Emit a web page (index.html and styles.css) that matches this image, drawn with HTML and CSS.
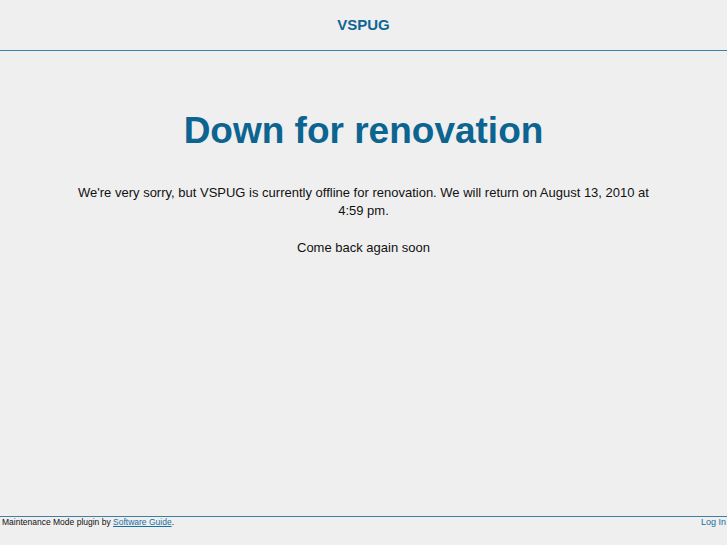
FILE: index.html
```html
<!DOCTYPE html>
<html lang="en">
<head>
    <meta charset="UTF-8">
    <title>VSPUG - Down for renovation</title>
    <link rel="stylesheet" href="styles.css">
</head>
<body>
    <div class="header">
        <a class="site-name" href="#">VSPUG</a>
    </div>

    <div class="content">
        <h1>Down for renovation</h1>
        <p>We're very sorry, but VSPUG is currently offline for renovation. We will return on August 13, 2010 at 4:59 pm.</p>
        <p>Come back again soon</p>
    </div>

    <div class="footer">
        <span>Maintenance Mode plugin by <a href="#">Software Guide</a>.</span>
        <a class="login" href="#">Log In</a>
    </div>
</body>
</html>
```

FILE: styles.css
```css
html, body {
    height: 100%;
}
body {
    margin: 0;
    background-color: #efefef;
    font-family: "Liberation Sans", Arial, sans-serif;
    color: #111;
    display: flex;
    flex-direction: column;
}
.header {
    height: 50px;
    border-bottom: 1px solid #3f7ea5;
    display: flex;
    align-items: center;
    justify-content: center;
}
.site-name {
    color: #0f6593;
    font-weight: bold;
    font-size: 15px;
    text-decoration: none;
    margin-top: -2px;
}
.content {
    flex: 1;
    text-align: center;
    padding: 0 70px;
}
h1 {
    color: #0c6490;
    font-size: 37px;
    margin: 58px 0 31px;
    line-height: 44px;
}
.content p {
    font-size: 13px;
    line-height: 18px;
    margin: 0 0 19px;
}
/* footer */
.footer {
    border-top: 1px solid #3f7ea5;
    height: 28px;
    display: flex;
    justify-content: space-between;
    align-items: flex-start;
    padding: 0 1px 0 2px;
    font-size: 8.5px;
    line-height: 11px;
}
.footer a {
    color: #1a6ea0;
}
.footer .login {
    text-decoration: none;
    font-size: 9px;
}
```
